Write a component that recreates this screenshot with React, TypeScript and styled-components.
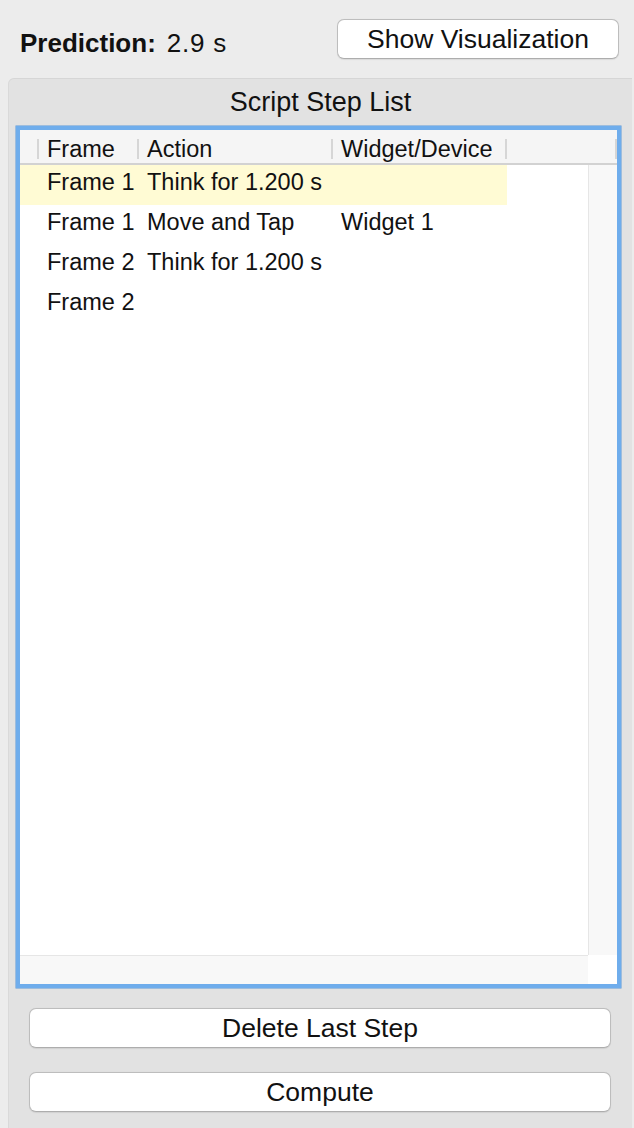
import styled, { createGlobalStyle } from "styled-components";

const GlobalStyle = createGlobalStyle`
    html, body {
        margin: 0;
        padding: 0;
        background: #ececec;
        font-family: "Liberation Sans", Arial, sans-serif;
        color: #111;
    }
    * {
        box-sizing: border-box;
    }
`;

const Page = styled.div`
    width: 634px;
    height: 1128px;
    overflow: hidden;
    background: #ececec;
`;

const TopBar = styled.div`
    display: flex;
    justify-content: space-between;
    align-items: flex-start;
    height: 78px;
    padding: 19px 15px 0 20px;
`;

const Prediction = styled.div`
    margin-top: 4px;
    font-size: 26px;
    line-height: 40px;
    white-space: nowrap;

    b {
        font-weight: 700;
        margin-right: 11px;
    }
`;

const Value = styled.span`
    letter-spacing: 0.8px;
`;

const Button = styled.button<{ $width?: number }>`
    display: block;
    width: ${(props) => (props.$width ? `${props.$width}px` : "100%")};
    height: 40px;
    padding: 0;
    background: #fff;
    border: 1.5px solid #bdbdbd;
    border-bottom-color: #adadad;
    border-radius: 7px;
    font-family: "Liberation Sans", Arial, sans-serif;
    font-size: 26.5px;
    line-height: 37px;
    color: #111;
    text-align: center;
    box-shadow: 0 0.5px 1px rgba(0, 0, 0, 0.08);
`;

const Panel = styled.section`
    margin-left: 8px;
    width: 624px;
    height: 1060px;
    background: #e2e2e2;
    border-top: 1px solid #d6d6d6;
    border-left: 1px solid #d9d9d9;
    border-radius: 6px 0 0 0;
`;

const PanelTitle = styled.h2`
    margin: 0;
    height: 47px;
    font-size: 27px;
    font-weight: 400;
    line-height: 47px;
    text-align: center;
`;

const TableBox = styled.div`
    display: flex;
    flex-direction: column;
    margin: 0 11px 0 7px;
    height: 862px;
    border: 4px solid #6fadec;
    box-shadow: 0 0 0 0.5px #5b98d8;
    background: #fff;
`;

const Header = styled.div`
    display: flex;
    height: 35px;
    background: #f5f5f5;
    border-bottom: 2px solid #d2d2d2;
`;

const HeaderCell = styled.div<{ $w: number }>`
    position: relative;
    flex: 0 0 ${(props) => props.$w}px;
    padding: 5px 0 0 8px;
    font-size: 23.5px;
    line-height: 28px;
    white-space: nowrap;

    &::after {
        content: "";
        position: absolute;
        right: 0;
        top: 9px;
        width: 2px;
        height: 20px;
        background: #d6d6d6;
    }
`;

const Body = styled.div`
    display: flex;
    flex: 1;
    min-height: 0;
`;

const Rows = styled.div`
    flex: 1;
`;

const Row = styled.div<{ $selected?: boolean }>`
    display: flex;
    width: 487px;
    height: 40px;
    background: ${(props) => (props.$selected ? "#fffbd4" : "transparent")};
`;

const Cell = styled.div<{ $w: number }>`
    flex: 0 0 ${(props) => props.$w}px;
    padding: 0 0 6px 8px;
    font-size: 23.5px;
    line-height: 34px;
    white-space: nowrap;
`;

const VScroll = styled.div`
    width: 29px;
    background: #f8f8f8;
    border-left: 1.5px solid #e6e6e6;
`;

const Footer = styled.div`
    display: flex;
    height: 29px;
`;

const HScroll = styled.div`
    flex: 1;
    background: #f8f8f8;
    border-top: 1.5px solid #e6e6e6;
`;

const Corner = styled.div`
    width: 29px;
    background: #fff;
`;

const Actions = styled.div`
    display: flex;
    flex-direction: column;
    gap: 24px;
    padding: 20px 21px 0 20px;
`;

const columns = [
    { key: "lead", label: "", w: 19 },
    { key: "frame", label: "Frame", w: 100 },
    { key: "action", label: "Action", w: 194 },
    { key: "widget", label: "Widget/Device", w: 174 },
    { key: "rest", label: "", w: 110 },
];

const steps = [
    { frame: "Frame 1", action: "Think for 1.200 s", widget: "", selected: true },
    { frame: "Frame 1", action: "Move and Tap", widget: "Widget 1" },
    { frame: "Frame 2", action: "Think for 1.200 s", widget: "" },
    { frame: "Frame 2", action: "", widget: "" },
];

export default function App() {
    return (
        <Page>
            <GlobalStyle />
            <TopBar>
                <Prediction>
                    <b>Prediction:</b>
                    <Value>2.9 s</Value>
                </Prediction>
                <Button $width={282}>Show Visualization</Button>
            </TopBar>
            <Panel>
                <PanelTitle>Script Step List</PanelTitle>
                <TableBox>
                    <Header>
                        {columns.map((c) => (
                            <HeaderCell key={c.key} $w={c.w}>
                                {c.label}
                            </HeaderCell>
                        ))}
                    </Header>
                    <Body>
                        <Rows>
                            {steps.map((s, i) => (
                                <Row key={i} $selected={s.selected}>
                                    <Cell $w={19} />
                                    <Cell $w={100}>{s.frame}</Cell>
                                    <Cell $w={194}>{s.action}</Cell>
                                    <Cell $w={174}>{s.widget}</Cell>
                                </Row>
                            ))}
                        </Rows>
                        <VScroll />
                    </Body>
                    <Footer>
                        <HScroll />
                        <Corner />
                    </Footer>
                </TableBox>
                <Actions>
                    <Button>Delete Last Step</Button>
                    <Button>Compute</Button>
                </Actions>
            </Panel>
        </Page>
    );
}
